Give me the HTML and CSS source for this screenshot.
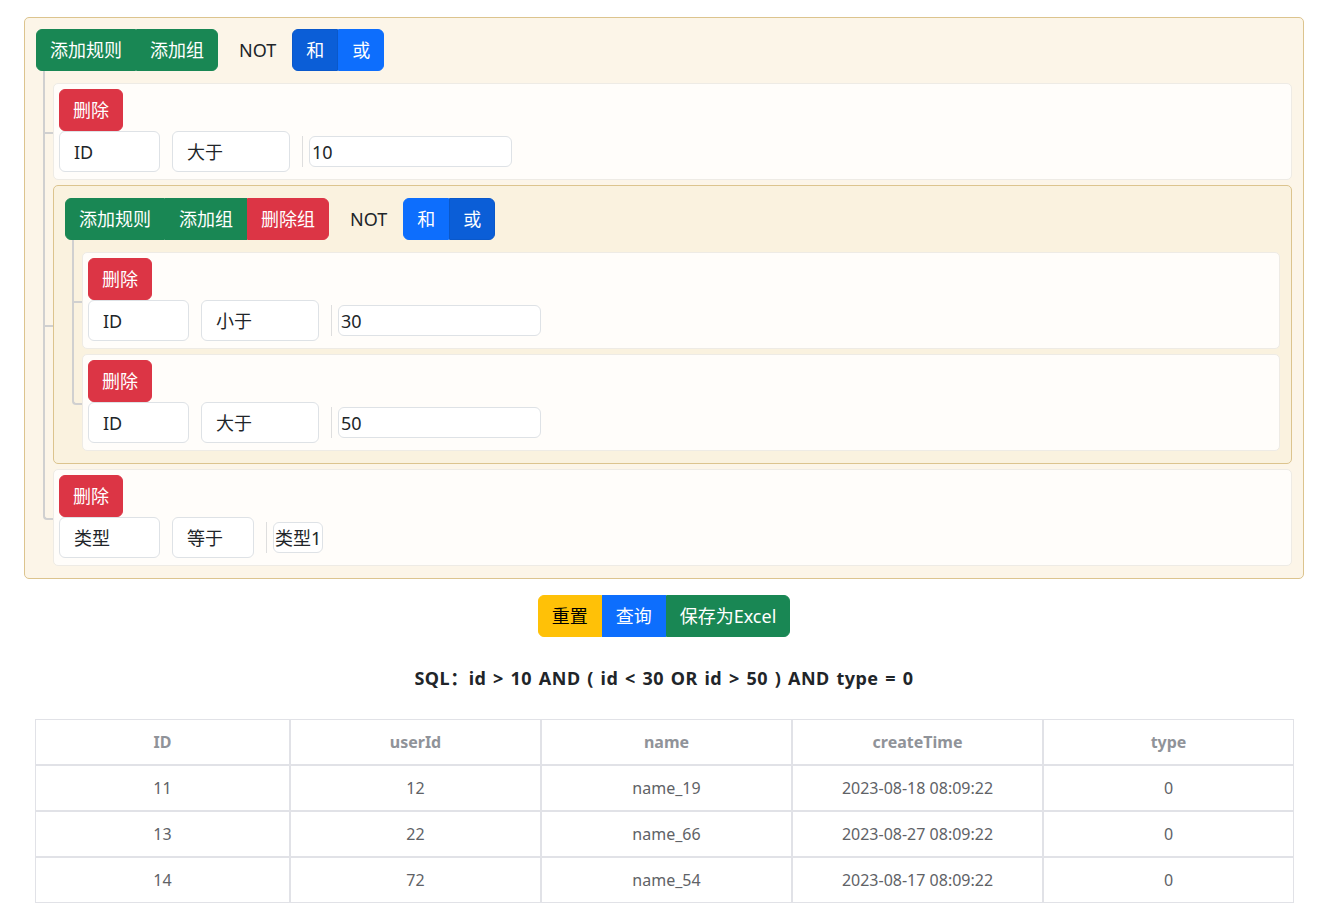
FILE: index.html
```html
<!DOCTYPE html>
<html lang="zh-CN">
<head>
<meta charset="utf-8">
<title>查询构建器</title>
<link rel="stylesheet" href="styles.css">
</head>
<body>
<div class="page">
  <div class="group group-root">
    <div class="group-header">
      <div class="btn-group">
        <button class="btn btn-green">添加规则</button>
        <button class="btn btn-green">添加组</button>
      </div>
      <span class="not-label">NOT</span>
      <div class="btn-group">
        <button class="btn btn-blue-active">和</button>
        <button class="btn btn-blue">或</button>
      </div>
    </div>
    <div class="group-body">
      <div class="rule branch">
        <div class="rule-top"><button class="btn btn-red">删除</button></div>
        <div class="rule-fields">
          <div class="select field">ID</div>
          <div class="select op op-wide">大于</div>
          <span class="sep"></span>
          <div class="value-input">10</div>
        </div>
      </div>

      <div class="group group-nested branch">
        <div class="group-header">
          <div class="btn-group">
            <button class="btn btn-green">添加规则</button>
            <button class="btn btn-green">添加组</button>
            <button class="btn btn-red">删除组</button>
          </div>
          <span class="not-label">NOT</span>
          <div class="btn-group">
            <button class="btn btn-blue">和</button>
            <button class="btn btn-blue-active">或</button>
          </div>
        </div>
        <div class="group-body">
          <div class="rule branch">
            <div class="rule-top"><button class="btn btn-red">删除</button></div>
            <div class="rule-fields">
              <div class="select field">ID</div>
              <div class="select op op-wide">小于</div>
              <span class="sep"></span>
              <div class="value-input">30</div>
            </div>
          </div>
          <div class="rule branch">
            <div class="rule-top"><button class="btn btn-red">删除</button></div>
            <div class="rule-fields">
              <div class="select field">ID</div>
              <div class="select op op-wide">大于</div>
              <span class="sep"></span>
              <div class="value-input">50</div>
            </div>
          </div>
        </div>
      </div>

      <div class="rule branch">
        <div class="rule-top"><button class="btn btn-red">删除</button></div>
        <div class="rule-fields">
          <div class="select field">类型</div>
          <div class="select op op-narrow">等于</div>
          <span class="sep"></span>
          <div class="value-select">类型1</div>
        </div>
      </div>
    </div>
  </div>

  <div class="actions">
    <div class="btn-group">
      <button class="btn btn-yellow">重置</button>
      <button class="btn btn-blue">查询</button>
      <button class="btn btn-green">保存为Excel</button>
    </div>
  </div>

  <p class="sql">SQL：id &gt; 10 AND ( id &lt; 30 OR id &gt; 50 ) AND type = 0</p>

  <table class="result">
    <thead>
      <tr><th class="col-first">ID</th><th>userId</th><th>name</th><th>createTime</th><th>type</th></tr>
    </thead>
    <tbody>
      <tr><td>11</td><td>12</td><td>name_19</td><td>2023-08-18 08:09:22</td><td>0</td></tr>
      <tr><td>13</td><td>22</td><td>name_66</td><td>2023-08-27 08:09:22</td><td>0</td></tr>
      <tr><td>14</td><td>72</td><td>name_54</td><td>2023-08-17 08:09:22</td><td>0</td></tr>
    </tbody>
  </table>
</div>
</body>
</html>
```

FILE: styles.css
```css
* { box-sizing: border-box; }

html, body {
  margin: 0;
  padding: 0;
  background: #ffffff;
}

body {
  font-family: "Noto Sans", "Noto Sans CJK SC", sans-serif;
  font-size: 18px;
  color: #212529;
}

.page {
  padding: 17px 28px 0 24px;
}

/* ---------- groups ---------- */
.group {
  border: 1px solid #dcc48e;
  border-radius: 5px;
  padding: 11px 11px 12px 11px;
}

.group-root {
  background: #fcf5e8;
}

.group-nested {
  background: #faf2df;
  padding-top: 12px;
}

.group-header {
  display: flex;
  align-items: center;
  height: 42px;
}

.not-label {
  margin: 0 16px 0 21px;
  line-height: 28px;
  color: #212529;
}

.group-body {
  display: flex;
  flex-direction: column;
  gap: 5px;
  margin: 12px 0 0 17px;
}

/* ---------- branch lines ---------- */
.branch {
  position: relative;
}

.branch::before {
  content: "";
  position: absolute;
  left: -11px;
  width: 8px;
  top: -13px;
  height: calc(50% + 13px);
  border-left: 2px solid #d0d0d0;
  border-bottom: 2px solid #d0d0d0;
}

.branch::after {
  content: "";
  position: absolute;
  left: -11px;
  top: 50%;
  bottom: -6px;
  border-left: 2px solid #d0d0d0;
}

.branch:last-child::before {
  border-bottom-left-radius: 4px;
}

.branch:last-child::after {
  display: none;
}

/* ---------- rules ---------- */
.rule {
  background: #fffdfa;
  border: 1px solid #eeebe5;
  border-radius: 5px;
  padding: 5px 5px 7px 5px;
}

.rule-top {
  display: flex;
}

.rule-fields {
  display: flex;
  align-items: center;
  gap: 12px;
  height: 41px;
}

.select {
  height: 41px;
  border: 1px solid #dee2e6;
  border-radius: 6px;
  background: #ffffff;
  padding: 0 14px;
  display: flex;
  align-items: center;
  line-height: 28px;
  color: #212529;
}

.field { width: 101px; }
.op-wide { width: 118px; }
.op-narrow { width: 82px; }

.sep {
  width: 1px;
  height: 31px;
  background: #dedede;
  margin-right: -6px;
}

.value-input {
  width: 203px;
  height: 31px;
  border: 1px solid #dee2e6;
  border-radius: 6px;
  background: #ffffff;
  padding: 0 2px;
  display: flex;
  align-items: center;
  line-height: 28px;
  color: #212529;
}

.value-select {
  height: 31px;
  border: 1px solid #dee2e6;
  border-radius: 6px;
  background: #ffffff;
  padding: 0 1px;
  display: flex;
  align-items: center;
  line-height: 28px;
  color: #212529;
}

/* ---------- buttons ---------- */
.btn-group {
  display: inline-flex;
}

.btn {
  font-family: inherit;
  font-size: 18px;
  line-height: 28px;
  height: 42px;
  padding: 6px 13px;
  border: 1px solid transparent;
  border-radius: 0;
  color: #ffffff;
  cursor: pointer;
  white-space: nowrap;
}

.btn-group .btn:first-child {
  border-top-left-radius: 6px;
  border-bottom-left-radius: 6px;
}

.btn-group .btn:last-child {
  border-top-right-radius: 6px;
  border-bottom-right-radius: 6px;
}

.rule-top .btn {
  border-radius: 6px;
}

.btn-green { background: #198754; border-color: #198754; }
.btn-red { background: #dc3545; border-color: #dc3545; }
.btn-blue { background: #0d6efd; border-color: #0d6efd; }
.btn-blue-active { background: #0b5ed7; border-color: #0a58ca; }
.btn-yellow { background: #ffc107; border-color: #ffc107; color: #000000; }

/* ---------- actions ---------- */
.actions {
  display: flex;
  justify-content: center;
  margin-top: 16px;
}

.sql {
  margin: 28px 0 27px;
  text-align: center;
  font-weight: 700;
  line-height: 27px;
  letter-spacing: 0.5px;
  word-spacing: 1.5px;
  color: #212529;
}

/* ---------- table ---------- */
.result {
  width: calc(100% - 21px);
  margin: 0 10px 0 11px;
  border-collapse: separate;
  border-spacing: 0;
  table-layout: fixed;
  font-size: 16px;
}

.result .col-first {
  width: 255px;
}

.result th,
.result td {
  border: 1px solid #e1e2e7;
  height: 46px;
  text-align: center;
  padding: 0 8px;
}

.result th {
  color: #909399;
  font-weight: 700;
}

.result td {
  color: #606266;
}
```
